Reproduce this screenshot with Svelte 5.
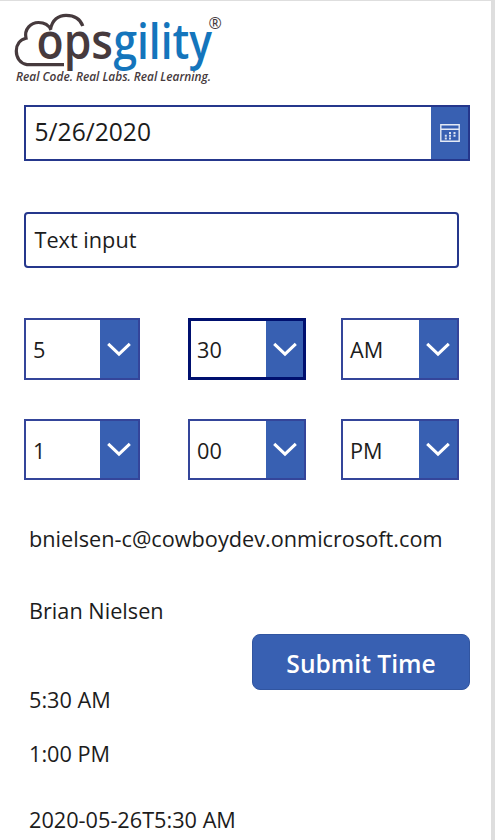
<script>
  const times = [
    [{ value: '5' }, { value: '30', focused: true }, { value: 'AM' }],
    [{ value: '1' }, { value: '00' }, { value: 'PM' }]
  ];
</script>

<main class="screen">
  <header>
    <svg class="logo" width="240" height="95" viewBox="0 0 240 95" role="img" aria-label="Opsgility">
      <path d="M64 64.6H27C20 63.5 16.3 57.5 16.3 51C16.3 44.5 20 39.5 26 38.2C24 29 31 22.5 38.5 22.5C44.5 22.5 49 25.5 51 30M50.5 29.5C52 20 58.5 15.3 66 15.3C74.5 15.3 80.5 19.5 82.8 26" fill="none" stroke="#463a3d" stroke-width="3.2" />
      <text class="word" x="36.5" y="58.5" textLength="76.5" lengthAdjust="spacingAndGlyphs" fill="#463a3d">ops</text>
      <text class="word" x="113.5" y="58.5" textLength="98.5" lengthAdjust="spacingAndGlyphs" fill="#1475bc">gility</text>
      <text class="reg" x="208.5" y="29">®</text>
      <text class="tagline" x="16" y="80.8" textLength="195" lengthAdjust="spacingAndGlyphs">Real Code. Real Labs. Real Learning.</text>
    </svg>
  </header>

  <div class="date">
    <span>5/26/2020</span>
    <button aria-label="Open calendar">
      <svg width="20" height="18" viewBox="0 0 20 18">
        <path d="M.8.8H19.2V17.2H.8zM.8 5.2H19.2" fill="none" stroke="#e4eaf5" stroke-width="1.4" />
        <path d="M9 8h2v2H9zM13.5 8h2v2h-2zM4.8 10.7h2v2h-2zM9 10.7h2v2H9zM13.5 10.7h2v2h-2zM4.8 13.4h2v2h-2zM9 13.4h2v2H9z" fill="#d9e1f1" />
      </svg>
    </button>
  </div>

  <div class="input">Text input</div>

  {#each times as row}
    <div class="row">
      {#each row as item}
        <div class="select" class:focused={item.focused}>
          <span>{item.value}</span>
          <i>
            <svg width="24" height="15" viewBox="0 0 24 15">
              <path d="M1.2 1.8L12 12.2L22.8 1.8" fill="none" stroke="#fff" stroke-width="3" />
            </svg>
          </i>
        </div>
      {/each}
    </div>
  {/each}

  <p class="label email">bnielsen-c@cowboydev.onmicrosoft.com</p>
  <p class="label name">Brian Nielsen</p>
  <button class="submit">Submit Time</button>
  <p class="label start">5:30 AM</p>
  <p class="label end">1:00 PM</p>
  <p class="label stamp">2020-05-26T5:30 AM</p>

  <svg class="cursor" width="4" height="20" viewBox="0 0 4 20">
    <path d="M.8 1V17L4 14M.8 1L4 4" fill="#fff" stroke="#111" stroke-width="1.2" />
  </svg>
</main>

<style>
  :global(body) { background: #fff; }
  .screen {
    box-sizing: border-box;
    position: relative;
    display: flex;
    flex-direction: column;
    width: 495px;
    height: 840px;
    padding-left: 24px;
    overflow: hidden;
    border-top: 1px solid #dedede;
    border-right: 4px solid #dedede;
    font-family: "Open Sans", sans-serif;
    font-size: 21.7px;
    font-weight: 400;
    color: #1c1c1c;
  }
  header { height: 104px; flex: none; margin-left: -24px; }
  .logo { display: block; margin-top: -1px; }
  .word { font-family: "Open Sans", sans-serif; font-size: 48px; font-weight: 540; }
  .reg { font-family: "Open Sans", sans-serif; font-size: 16px; font-weight: 500; fill: #463a3d; }
  .tagline { font-family: "Open Sans", sans-serif; font-size: 12.5px; font-style: italic; font-weight: 550; fill: #463a3d; }
  .date, .input, .select, .submit { box-sizing: border-box; flex: none; }
  .date {
    display: flex;
    width: 446px;
    height: 56px;
    border: 2px solid #25378c;
    font-size: 24.6px;
    line-height: 49px;
  }
  .date span { flex: 1; padding-left: 8.5px; }
  .date button {
    display: flex;
    align-items: center;
    justify-content: center;
    width: 37px;
    padding: 0;
    border: 0;
    background: #3860b2;
  }
  .input {
    width: 435px;
    height: 56px;
    margin: 51px 0 50px;
    padding-left: 8.5px;
    border: 2px solid #25378c;
    border-radius: 4px;
    line-height: 51px;
  }
  .row {
    display: grid;
    grid-template-columns: 164px 153px 118px;
    height: 62px;
    flex: none;
  }
  .row + .row { margin-top: 39px; }
  .select {
    display: flex;
    width: 118px;
    height: 62px;
    border: 2px solid #34459a;
    line-height: 60px;
  }
  .row + .row .select { height: 61px; }
  .select:first-child { width: 116px; }
  .select span { flex: 1; height: 57px; padding-left: 7px; }
  .select i {
    display: flex;
    align-items: center;
    justify-content: center;
    width: 38px;
    background: #3860b2;
  }
  .focused { border: 3px solid #00106f; line-height: 58px; }
  .focused span { height: 56px; padding-left: 6px; }
  .focused i { width: 37px; }
  .focused svg { margin-left: 1px; }
  .label { flex: none; height: 30px; margin: 0 0 0 5px; line-height: 32px; white-space: nowrap; }
  .email { margin-top: 42px; }
  .name { margin-top: 42px; }
  .submit {
    width: 218px;
    height: 56px;
    margin: 9px 0 0 228px;
    padding: 2px 0 0;
    border: 1px solid #3155a0;
    border-radius: 8px;
    background: #3860b2;
    color: #fff;
    font: 620 24.6px/54px "Open Sans", sans-serif;
  }
  .start { margin-top: -6px; }
  .end { margin-top: 24px; }
  .stamp { margin-top: 36px; }
  .cursor { position: absolute; right: -4px; top: 475px; }
</style>
